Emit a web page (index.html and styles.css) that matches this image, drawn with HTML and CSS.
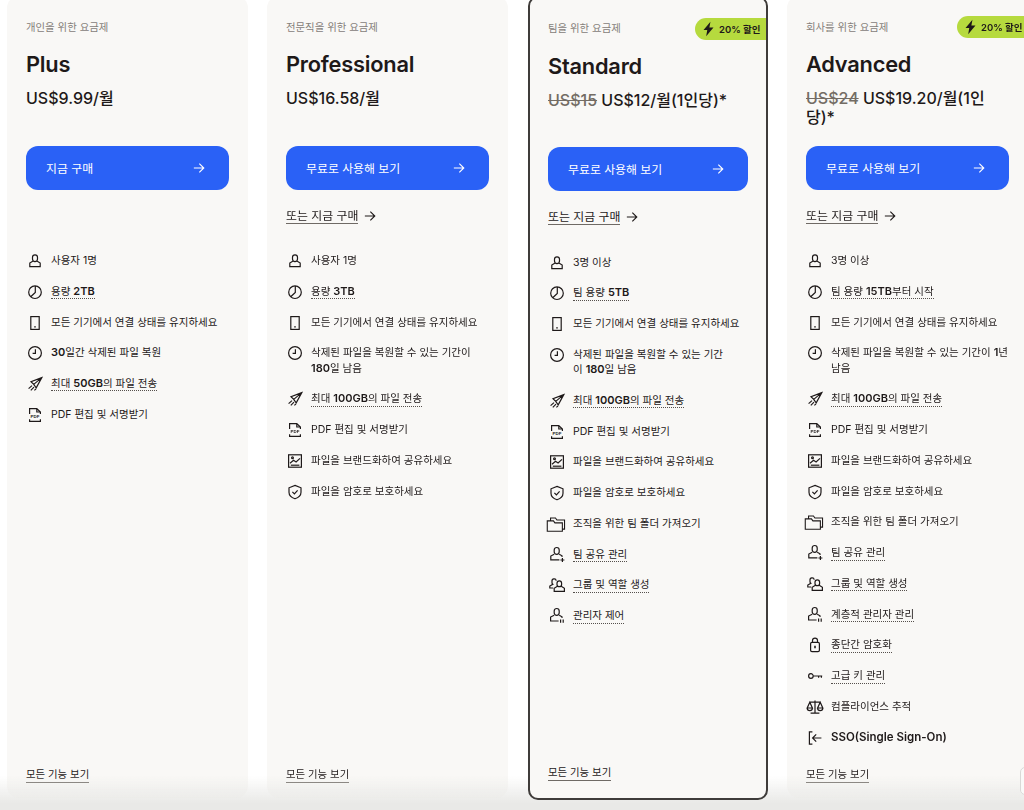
FILE: index.html
```html
<!DOCTYPE html>
<html lang="ko">
<head>
<meta charset="utf-8">
<title>요금제</title>
<link rel="stylesheet" href="styles.css">
</head>
<body>
<svg class="defs" width="0" height="0" aria-hidden="true">
  <defs>
    <symbol id="i-user" viewBox="0 0 18 18"><path d="M6.500 5.300a2.500 2.500 0 0 1 5 0v1.800a2.500 2.500 0 0 1-5 0zM6.700 9.300 3.800 11v3.600h10.400V11l-2.900-1.700"/></symbol>
    <symbol id="i-pie" viewBox="0 0 18 18"><circle cx="9" cy="9.200" r="6.300"/><path d="M9.300 3v6.400l-4.600 4.400"/></symbol>
    <symbol id="i-device" viewBox="0 0 18 18"><rect x="4.800" y="2.600" width="8.400" height="12.800"/><path d="M9 12.200v1.200" class="thick"/></symbol>
    <symbol id="i-clock" viewBox="0 0 18 18"><circle cx="9" cy="9" r="6.400"/><path d="M9.400 5.200v4.200H6.600"/></symbol>
    <symbol id="i-send" viewBox="0 0 18 18"><path d="M15.800 2.600 5 6.800l2.700 2.600 2.500 3.400zM15.800 2.600 7.700 9.400M6 10.600l-3.400 3M8 12.200l-3.200 3.200M10 13.800l-1.600 1.600"/></symbol>
    <symbol id="i-pdf" viewBox="0 0 18 18"><path d="M3.600 8V2.600h7.200l3.600 3.400v2M3.600 13.200v2.200h10.800v-2.200M10.800 2.600V6h3.600"/><text class="pdf-text" x="9" y="12.200">PDF</text></symbol>
    <symbol id="i-image" viewBox="0 0 18 18"><rect x="2.600" y="2.800" width="12.800" height="12.400"/><path d="m4 11.200 3.500-3 2.600 1.800L14 6.400"/><circle cx="6.500" cy="5.800" r=".9"/><path d="M4.800 13.200h8.600"/></symbol>
    <symbol id="i-shield" viewBox="0 0 18 18"><path d="M9 2.400 15 4.800v4.400c0 3-2.600 5.400-6 6.600-3.400-1.200-6-3.600-6-6.600V4.800zM6.400 8.800l2 2 3.200-3.400"/></symbol>
    <symbol id="i-folder" viewBox="0 0 22 18"><path d="M5 5.600V2.400h5.400l1.600 2.200h8.400v10h-2.400M1.400 5.600h6.800l1.600 2.200h8.200V17H1.400z"/></symbol>
    <symbol id="i-userplus" viewBox="0 0 18 18"><path d="M6.200 4a2.500 2.500 0 0 1 5 0v1.800a2.500 2.500 0 0 1-5 0zM6.200 8.200 2.800 10v3.800h8.600M11.200 8.200 14 9.800v1.200M14.400 12v4M12.400 14h4"/></symbol>
    <symbol id="i-users" viewBox="0 0 18 18"><path d="M8.200 4.800A2.100 2.100 0 0 0 4 5.300v1.400c0 .7.300 1.200.8 1.600L1.800 10v2h3.400M9 7.200a2.300 2.300 0 0 1 4.600 0v1.200a2.300 2.300 0 0 1-4.600 0zM9 10.600l-2.800 1.700v3.100h10.200v-3.100l-2.800-1.700"/></symbol>
    <symbol id="i-userbars" viewBox="0 0 18 18"><path d="M6.200 4a2.500 2.500 0 0 1 5 0v1.800a2.500 2.500 0 0 1-5 0zM6.200 8.200 2.600 10v4h8M11.200 8.200 14 9.800v1.200M12.600 12.400v3.400M15.200 12.400v3.400"/></symbol>
    <symbol id="i-lock" viewBox="0 0 18 18"><rect x="4.600" y="6.400" width="8.800" height="9.200" rx="1.400"/><path d="M6.500 6.400V4.600a2.500 2.500 0 0 1 5 0v1.800"/><path class="thick" d="M9 9.800v2.400"/></symbol>
    <symbol id="i-key" viewBox="0 0 18 18"><circle cx="4.900" cy="9" r="2.300"/><path d="M7.200 9h9M12.600 9v1.800M15.400 9v1.800"/></symbol>
    <symbol id="i-scale" viewBox="0 0 18 18"><path d="M9 2.400v12.400M4.600 15.200h8.800M3.800 4.200h10.400M3.800 4.200 1.200 10h5.200zM14.200 4.200 11.600 10h5.200zM1.200 10a2.600 2.600 0 0 0 5.200 0M11.600 10a2.600 2.600 0 0 0 5.200 0"/></symbol>
    <symbol id="i-sso" viewBox="0 0 18 18"><path d="M6.400 2.800H3.400v12.400h3M15.400 9H6.800M10.200 5.400 6.600 9l3.600 3.600"/></symbol>
    <symbol id="i-arrow" viewBox="0 0 14 14"><path d="M1 7h11.600M7.400 1.800 12.600 7l-5.200 5.200"/></symbol>
    <symbol id="i-bolt" viewBox="0 0 16 18"><path class="solid" d="M10.200 .8 2.400 10.200h4.200L5.400 17.200 13.600 7.400H9z"/></symbol>
  </defs>
</svg>

<main class="stage">
  <section class="card">
    <p class="eyebrow">개인을 위한 요금제</p>
    <h2 class="plan">Plus</h2>
    <p class="price">US$9.99/월</p>
    <div class="cta">
      <a class="buy"><span>지금 구매</span><svg class="arrow"><use href="#i-arrow"/></svg></a>
    </div>
    <ul class="features">
      <li><svg class="ico"><use href="#i-user"/></svg><span>사용자 1명</span></li>
      <li><svg class="ico"><use href="#i-pie"/></svg><span class="tip">용량 <b>2TB</b></span></li>
      <li><svg class="ico"><use href="#i-device"/></svg><span>모든 기기에서 연결 상태를 유지하세요</span></li>
      <li><svg class="ico"><use href="#i-clock"/></svg><span><b>30</b>일간 삭제된 파일 복원</span></li>
      <li><svg class="ico"><use href="#i-send"/></svg><span class="tip">최대 <b>50GB</b>의 파일 전송</span></li>
      <li><svg class="ico"><use href="#i-pdf"/></svg><span>PDF 편집 및 서명받기</span></li>
    </ul>
    <a class="all">모든 기능 보기</a>
  </section>

  <section class="card">
    <p class="eyebrow">전문직을 위한 요금제</p>
    <h2 class="plan">Professional</h2>
    <p class="price">US$16.58/월</p>
    <div class="cta">
      <a class="buy"><span>무료로 사용해 보기</span><svg class="arrow"><use href="#i-arrow"/></svg></a>
      <p class="alt"><a>또는 지금 구매</a><svg class="arrow"><use href="#i-arrow"/></svg></p>
    </div>
    <ul class="features">
      <li><svg class="ico"><use href="#i-user"/></svg><span>사용자 1명</span></li>
      <li><svg class="ico"><use href="#i-pie"/></svg><span class="tip">용량 <b>3TB</b></span></li>
      <li><svg class="ico"><use href="#i-device"/></svg><span>모든 기기에서 연결 상태를 유지하세요</span></li>
      <li><svg class="ico"><use href="#i-clock"/></svg><span>삭제된 파일을 복원할 수 있는 기간이<br><b>180</b>일 남음</span></li>
      <li><svg class="ico"><use href="#i-send"/></svg><span class="tip">최대 <b>100GB</b>의 파일 전송</span></li>
      <li><svg class="ico"><use href="#i-pdf"/></svg><span>PDF 편집 및 서명받기</span></li>
      <li><svg class="ico"><use href="#i-image"/></svg><span>파일을 브랜드화하여 공유하세요</span></li>
      <li><svg class="ico"><use href="#i-shield"/></svg><span>파일을 암호로 보호하세요</span></li>
    </ul>
    <a class="all">모든 기능 보기</a>
  </section>

  <section class="card card-featured">
    <span class="badge"><svg class="bolt"><use href="#i-bolt"/></svg>20% 할인</span>
    <p class="eyebrow">팀을 위한 요금제</p>
    <h2 class="plan">Standard</h2>
    <p class="price"><s>US$15</s> US$12/월(1인당)*</p>
    <div class="cta">
      <a class="buy"><span>무료로 사용해 보기</span><svg class="arrow"><use href="#i-arrow"/></svg></a>
      <p class="alt"><a>또는 지금 구매</a><svg class="arrow"><use href="#i-arrow"/></svg></p>
    </div>
    <ul class="features">
      <li><svg class="ico"><use href="#i-user"/></svg><span>3명 이상</span></li>
      <li><svg class="ico"><use href="#i-pie"/></svg><span class="tip">팀 용량 <b>5TB</b></span></li>
      <li><svg class="ico"><use href="#i-device"/></svg><span>모든 기기에서 연결 상태를 유지하세요</span></li>
      <li><svg class="ico"><use href="#i-clock"/></svg><span>삭제된 파일을 복원할 수 있는 기간<br>이 <b>180</b>일 남음</span></li>
      <li><svg class="ico"><use href="#i-send"/></svg><span class="tip">최대 <b>100GB</b>의 파일 전송</span></li>
      <li><svg class="ico"><use href="#i-pdf"/></svg><span>PDF 편집 및 서명받기</span></li>
      <li><svg class="ico"><use href="#i-image"/></svg><span>파일을 브랜드화하여 공유하세요</span></li>
      <li><svg class="ico"><use href="#i-shield"/></svg><span>파일을 암호로 보호하세요</span></li>
      <li><svg class="ico ico-wide"><use href="#i-folder"/></svg><span>조직을 위한 팀 폴더 가져오기</span></li>
      <li><svg class="ico"><use href="#i-userplus"/></svg><span class="tip">팀 공유 관리</span></li>
      <li><svg class="ico"><use href="#i-users"/></svg><span class="tip">그룹 및 역할 생성</span></li>
      <li><svg class="ico"><use href="#i-userbars"/></svg><span class="tip">관리자 제어</span></li>
    </ul>
    <a class="all">모든 기능 보기</a>
  </section>

  <section class="card">
    <span class="badge"><svg class="bolt"><use href="#i-bolt"/></svg>20% 할인</span>
    <p class="eyebrow">회사를 위한 요금제</p>
    <h2 class="plan">Advanced</h2>
    <p class="price"><s>US$24</s> US$19.20/월(1인<br>당)*</p>
    <div class="cta">
      <a class="buy"><span>무료로 사용해 보기</span><svg class="arrow"><use href="#i-arrow"/></svg></a>
      <p class="alt"><a>또는 지금 구매</a><svg class="arrow"><use href="#i-arrow"/></svg></p>
    </div>
    <ul class="features">
      <li><svg class="ico"><use href="#i-user"/></svg><span>3명 이상</span></li>
      <li><svg class="ico"><use href="#i-pie"/></svg><span class="tip">팀 용량 <b>15TB</b>부터 시작</span></li>
      <li><svg class="ico"><use href="#i-device"/></svg><span>모든 기기에서 연결 상태를 유지하세요</span></li>
      <li><svg class="ico"><use href="#i-clock"/></svg><span>삭제된 파일을 복원할 수 있는 기간이 <b>1</b>년<br>남음</span></li>
      <li><svg class="ico"><use href="#i-send"/></svg><span class="tip">최대 <b>100GB</b>의 파일 전송</span></li>
      <li><svg class="ico"><use href="#i-pdf"/></svg><span>PDF 편집 및 서명받기</span></li>
      <li><svg class="ico"><use href="#i-image"/></svg><span>파일을 브랜드화하여 공유하세요</span></li>
      <li><svg class="ico"><use href="#i-shield"/></svg><span>파일을 암호로 보호하세요</span></li>
      <li><svg class="ico ico-wide"><use href="#i-folder"/></svg><span>조직을 위한 팀 폴더 가져오기</span></li>
      <li><svg class="ico"><use href="#i-userplus"/></svg><span class="tip">팀 공유 관리</span></li>
      <li><svg class="ico"><use href="#i-users"/></svg><span class="tip">그룹 및 역할 생성</span></li>
      <li><svg class="ico"><use href="#i-userbars"/></svg><span class="tip">계층적 관리자 관리</span></li>
      <li><svg class="ico"><use href="#i-lock"/></svg><span class="tip">종단간 암호화</span></li>
      <li><svg class="ico"><use href="#i-key"/></svg><span class="tip">고급 키 관리</span></li>
      <li><svg class="ico"><use href="#i-scale"/></svg><span>컴플라이언스 추적</span></li>
      <li><svg class="ico"><use href="#i-sso"/></svg><span class="sso">SSO(Single Sign-On)</span></li>
    </ul>
    <a class="all">모든 기능 보기</a>
  </section>
  <div class="fade"></div>
  <div class="widget"></div>
</main>
</body>
</html>
```

FILE: styles.css
```css
* { box-sizing: border-box; }

html, body {
  margin: 0;
  height: 810px;
  overflow: hidden;
  background: #fff;
}

body {
  font-family: Inter, "Noto Sans CJK KR", sans-serif;
  color: #1e1919;
}

.defs { position: absolute; }

p, h2, ul { margin: 0; padding: 0; }

.stage {
  position: relative;
  display: flex;
  gap: 19px;
  width: 1060px;
  height: 814px;
  padding-left: 7px;
  margin-top: -4px;
  align-items: flex-start;
  filter: blur(.35px);
}

.card {
  position: relative;
  flex: 0 0 241px;
  height: 802px;
  display: flex;
  flex-direction: column;
  padding: 23.5px 19px 15.5px;
  background: #f9f8f6;
  border-radius: 12px;
}

.card > * { flex: none; }

.card-featured {
  z-index: 2;
  flex-basis: 240px;
  height: 804px;
  margin-left: 1px;
  padding: 23px 18px 17px;
  border: 2px solid #3f3c3a;
  border-radius: 10px;
}

.eyebrow {
  font-size: 10.4px;
  line-height: 16px;
  color: #85807a;
}

.plan {
  margin-top: 13.5px;
  font-size: 21.8px;
  line-height: 30px;
  font-weight: 600;
  letter-spacing: -.01em;
}

.price {
  margin-top: 10px;
  height: 57px;
  font-size: 16px;
  line-height: 19px;
  font-weight: 500;
  white-space: nowrap;
}

.card-featured .price { height: 56.5px; }

.price s { color: #736c64; }

.cta { height: 78px; }

.buy {
  display: flex;
  justify-content: space-between;
  align-items: center;
  height: 43.5px;
  padding: 0 24px 0 20px;
  background: #2a61f6;
  border-radius: 12px;
  color: #fff;
  font-size: 11.9px;
}

.arrow {
  width: 12px;
  height: 12px;
  fill: none;
  stroke: currentColor;
  stroke-width: 1.3;
}

.alt {
  display: flex;
  align-items: center;
  gap: 6px;
  margin-top: 17.5px;
  height: 18px;
  font-size: 11.9px;
}

.alt a, .all {
  border-bottom: 1px solid #6f6a65;
  line-height: 15px;
}

.features {
  list-style: none;
  margin-top: 29px;
  display: flex;
  flex-direction: column;
  gap: 15.35px;
  font-size: 10.5px;
  line-height: 15.4px;
  white-space: nowrap;
}

.card-featured .features { margin-top: 29.5px; }

.features li {
  display: flex;
  gap: 7px;
}

.features b {
  font-size: 11px;
  font-weight: 600;
}

.ico {
  flex: none;
  width: 18px;
  height: 18px;
  margin: -1px 0 -1.6px;
  fill: none;
  stroke: #1e1919;
  stroke-width: 1.2;
}

.ico-wide {
  width: 20px;
  margin: -1px 0 -1.6px -2px;
}

.solid { fill: #1e1919; stroke: none; }

.pdf-text {
  font: 700 4.4px "Liberation Sans", sans-serif;
  fill: #1e1919;
  stroke: none;
  text-anchor: middle;
}

.thick { stroke-width: 1.6; }

.tip {
  align-self: flex-start;
  height: 15.4px;
  border-bottom: 1px dotted #55504c;
}

.sso {
  font-size: 11.5px;
  font-weight: 600;
}

.all {
  margin-top: auto;
  align-self: flex-start;
  font-size: 10.4px;
}

.badge {
  position: absolute;
  top: 20px;
  right: 0;
  display: flex;
  align-items: center;
  gap: 3px;
  height: 22px;
  width: 71px;
  padding-left: 6px;
  background: #b6da3e;
  border-radius: 11px 0 0 11px;
  font-size: 9.5px;
  font-weight: 600;
  white-space: nowrap;
}

.bolt { width: 15px; height: 16px; flex: none; }

.fade {
  position: absolute;
  left: 0;
  right: 0;
  bottom: 0;
  height: 34px;
  background: linear-gradient(to bottom, rgba(232,232,230,0), #e9e9e7 80%);
  pointer-events: none;
}

.widget {
  position: absolute;
  left: 1020px;
  top: 771px;
  width: 20px;
  height: 28px;
  background: #fafaf9;
  border: 1px solid #d9d9d7;
  border-radius: 5px;
}
```
